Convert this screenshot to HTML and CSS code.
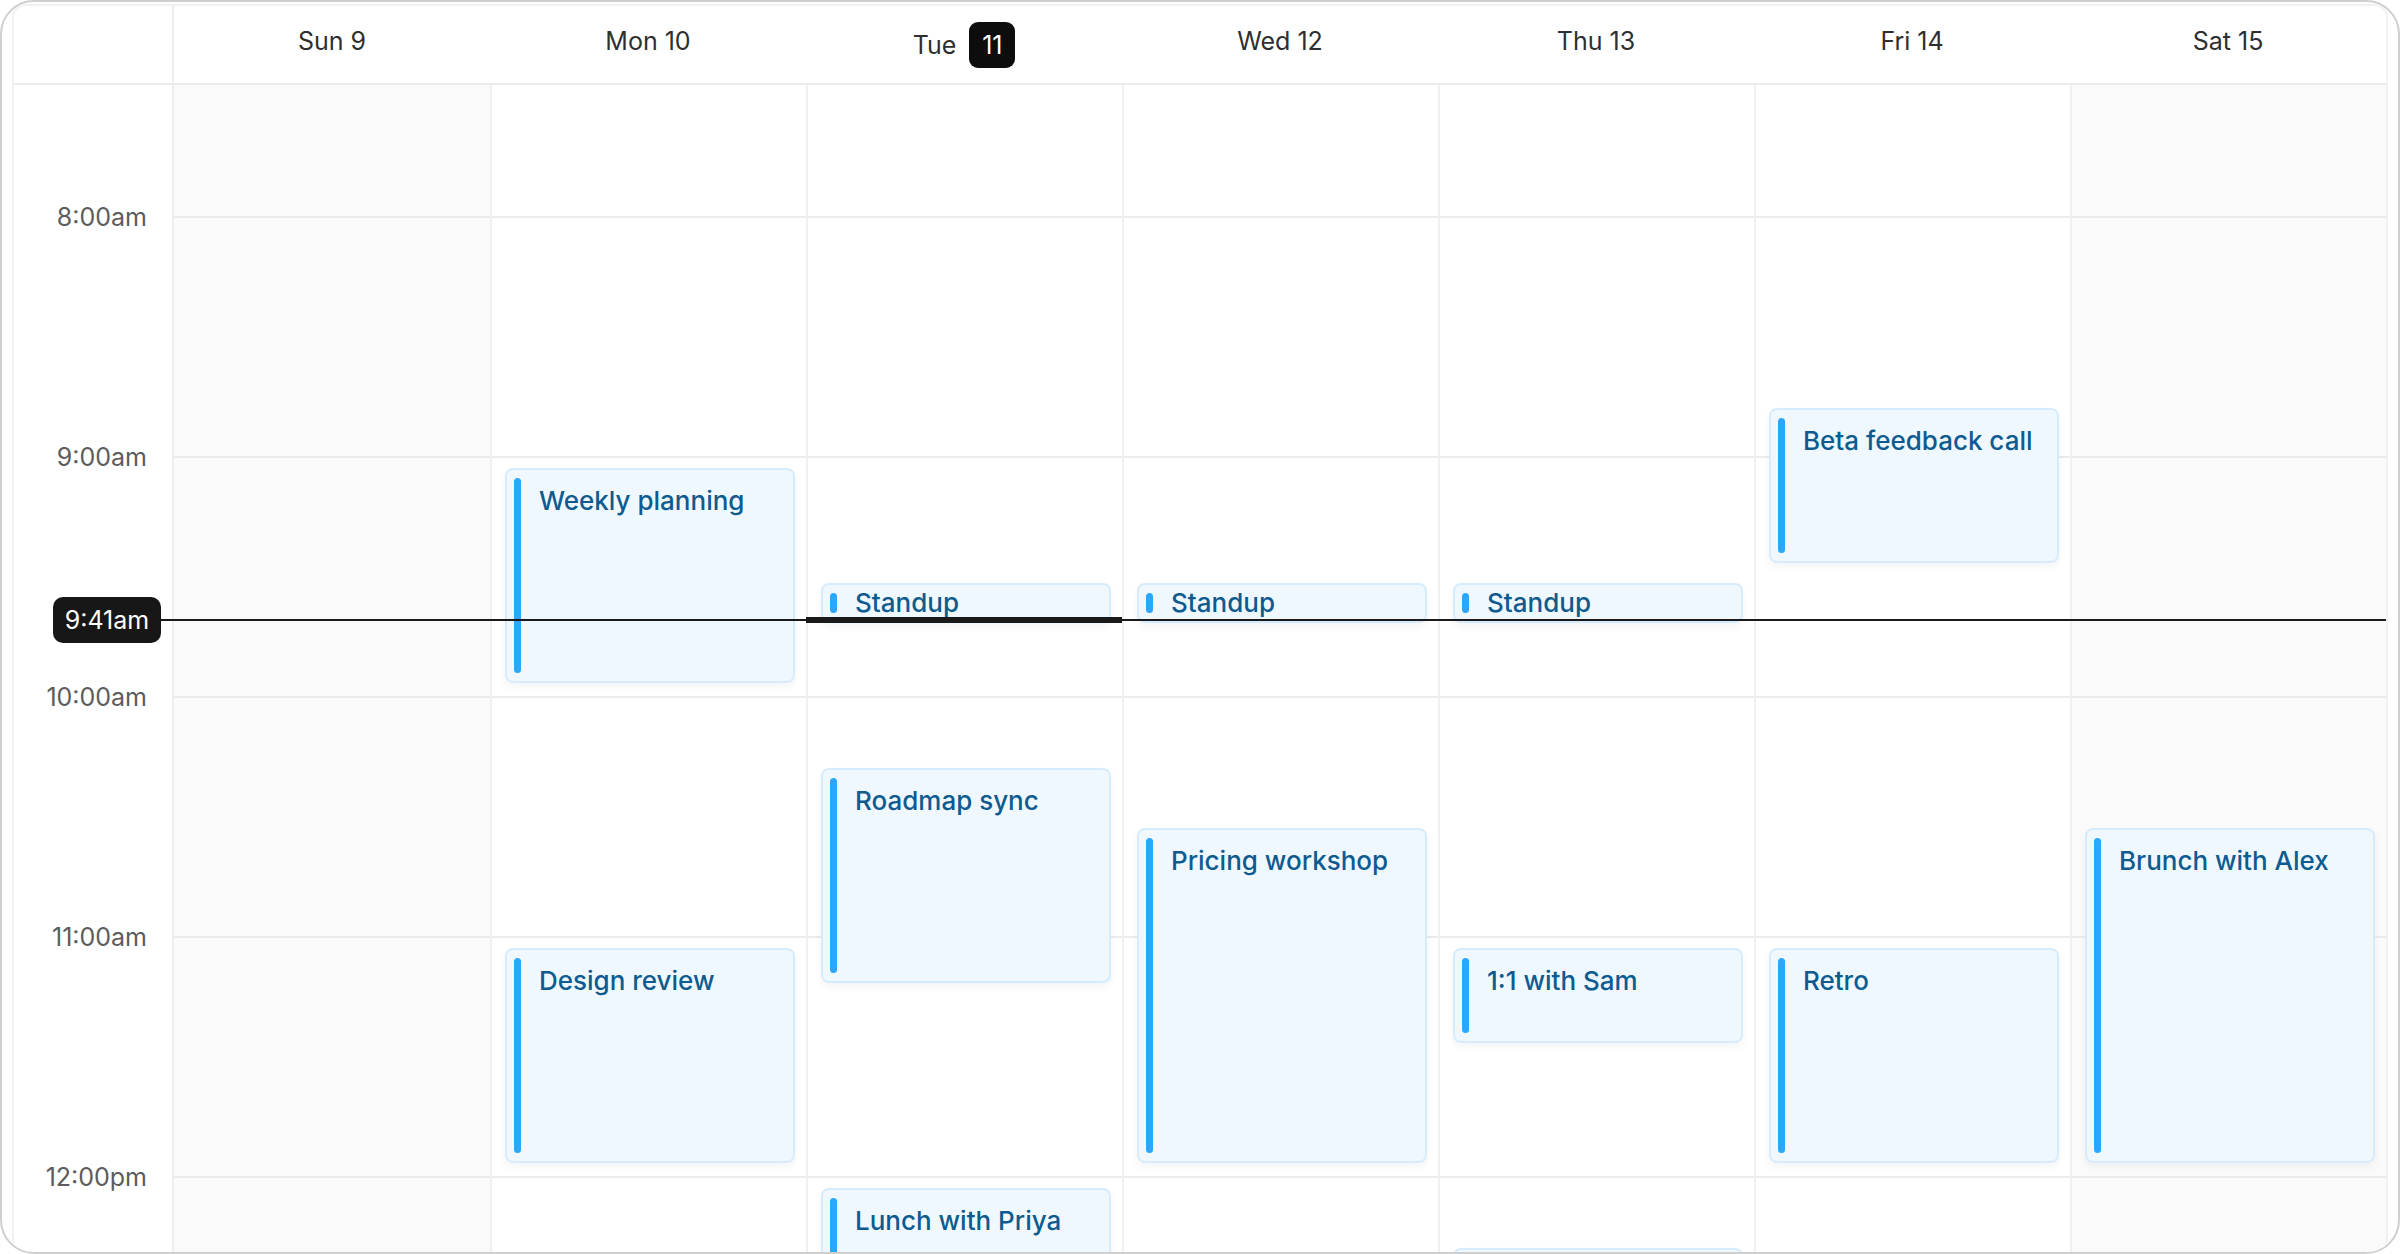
FILE: index.html
```html
<!DOCTYPE html>
<html lang="en">
<head>
<meta charset="utf-8">
<title>Week view</title>
<link rel="stylesheet" href="styles.css">
</head>
<body>
<div class="frame">
  <div class="cal">
    <div class="head">
      <div class="head-gutter"></div>
      <div class="head-cell"><span class="day">Sun 9</span></div>
      <div class="head-cell"><span class="day">Mon 10</span></div>
      <div class="head-cell"><span class="day today">Tue <span class="badge">11</span></span></div>
      <div class="head-cell"><span class="day">Wed 12</span></div>
      <div class="head-cell"><span class="day">Thu 13</span></div>
      <div class="head-cell"><span class="day">Fri 14</span></div>
      <div class="head-cell"><span class="day">Sat 15</span></div>
    </div>
    <div class="body">
      <div class="gutter">
        <div class="g-first"></div>
        <div class="g-hour"><span class="time">8:00am</span></div>
        <div class="g-hour"><span class="time">9:00am</span></div>
        <div class="g-hour"><span class="time">10:00am</span></div>
        <div class="g-hour"><span class="time">11:00am</span></div>
        <div class="g-hour"><span class="time">12:00pm</span></div>
      </div>

      <div class="col weekend first-col">
        <div class="slot-first"></div><div class="slot"></div><div class="slot"></div><div class="slot"></div><div class="slot"></div><div class="slot"></div>
      </div>

      <div class="col">
        <div class="slot-first"></div><div class="slot"></div><div class="slot"></div><div class="slot"></div><div class="slot"></div><div class="slot"></div>
        <div class="event" style="top:383px;height:215px"><span class="bar"></span><span class="title">Weekly planning</span></div>
        <div class="event" style="top:863px;height:215px"><span class="bar"></span><span class="title">Design review</span></div>
      </div>

      <div class="col">
        <div class="slot-first"></div><div class="slot"></div><div class="slot"></div><div class="slot"></div><div class="slot"></div><div class="slot"></div>
        <div class="event short" style="top:498px;height:40px"><span class="bar"></span><span class="title">Standup</span></div>
        <div class="event" style="top:683px;height:215px"><span class="bar"></span><span class="title">Roadmap sync</span></div>
        <div class="event" style="top:1103px;height:215px"><span class="bar"></span><span class="title">Lunch with Priya</span></div>
        <div class="today-line"></div>
      </div>

      <div class="col">
        <div class="slot-first"></div><div class="slot"></div><div class="slot"></div><div class="slot"></div><div class="slot"></div><div class="slot"></div>
        <div class="event short" style="top:498px;height:40px"><span class="bar"></span><span class="title">Standup</span></div>
        <div class="event" style="top:743px;height:335px"><span class="bar"></span><span class="title">Pricing workshop</span></div>
      </div>

      <div class="col">
        <div class="slot-first"></div><div class="slot"></div><div class="slot"></div><div class="slot"></div><div class="slot"></div><div class="slot"></div>
        <div class="event short" style="top:498px;height:40px"><span class="bar"></span><span class="title">Standup</span></div>
        <div class="event" style="top:863px;height:95px"><span class="bar"></span><span class="title">1:1 with Sam</span></div>
        <div class="event" style="top:1163px;height:155px"><span class="bar"></span></div>
      </div>

      <div class="col">
        <div class="slot-first"></div><div class="slot"></div><div class="slot"></div><div class="slot"></div><div class="slot"></div><div class="slot"></div>
        <div class="event" style="top:323px;height:155px"><span class="bar"></span><span class="title">Beta feedback call</span></div>
        <div class="event" style="top:863px;height:215px"><span class="bar"></span><span class="title">Retro</span></div>
      </div>

      <div class="col weekend">
        <div class="slot-first"></div><div class="slot"></div><div class="slot"></div><div class="slot"></div><div class="slot"></div><div class="slot"></div>
        <div class="event" style="top:743px;height:335px"><span class="bar"></span><span class="title">Brunch with Alex</span></div>
      </div>

      <div class="now-line"></div>
      <div class="now-pill">9:41am</div>
    </div>
  </div>
</div>
</body>
</html>
```

FILE: styles.css
```css
* { box-sizing: border-box; }

html, body {
  margin: 0;
  padding: 0;
  width: 2400px;
  height: 1254px;
  overflow: hidden;
  background: #ffffff;
  font-family: Inter, "Noto Sans", "Liberation Sans", sans-serif;
}

.frame {
  width: 2400px;
  height: 1254px;
  border: 2px solid #cfcfcf;
  border-radius: 34px;
  padding: 2px 10px 0 10px;
  overflow: hidden;
  background: #ffffff;
}

.cal {
  height: 100%;
  border: 2px solid #f1f1f1;
  border-bottom: none;
  border-radius: 14px 14px 0 0;
  overflow: hidden;
  display: flex;
  flex-direction: column;
}

/* header */
.head {
  display: grid;
  grid-template-columns: 160px repeat(7, 1fr);
  height: 79px;
  border-bottom: 2px solid #ebebeb;
  flex: none;
}

.head-gutter {
  border-right: 2px solid #eeeeee;
}

.head-cell {
  display: flex;
  justify-content: center;
  align-items: flex-start;
  padding-top: 16px;
}

.day {
  display: inline-flex;
  align-items: center;
  gap: 13px;
  font-size: 25px;
  line-height: 38px;
  color: #2f2f2f;
}

.day.today {
  height: 46px;
}

.badge {
  display: inline-flex;
  align-items: center;
  justify-content: center;
  width: 46px;
  height: 46px;
  border-radius: 9px;
  background: #0d0d0d;
  color: #ffffff;
  font-size: 25px;
}

/* body */
.body {
  position: relative;
  display: grid;
  grid-template-columns: 160px repeat(7, 1fr);
  flex: 1;
  min-height: 0;
  overflow: hidden;
}

.gutter {
  display: flex;
  flex-direction: column;
  border-right: 2px solid #eeeeee;
  padding-right: 25px;
  align-items: stretch;
}

.g-first {
  height: 131px;
  flex: none;
}

.g-hour {
  height: 240px;
  flex: none;
  display: flex;
  justify-content: flex-end;
  align-items: flex-start;
}

.time {
  display: block;
  margin-top: -14px;
  font-size: 25px;
  line-height: 30px;
  color: #5c5c5c;
}

.col {
  position: relative;
  display: flex;
  flex-direction: column;
  border-left: 2px solid #f0f0f0;
  background: #ffffff;
}

.col.first-col {
  border-left: none;
}

.col.weekend {
  background: #fafafa;
}

.slot-first {
  height: 131px;
  flex: none;
}

.slot {
  height: 240px;
  flex: none;
  border-top: 2px solid #ebebeb;
}

/* events */
.event {
  position: absolute;
  left: 13px;
  right: 11px;
  z-index: 1;
  display: flex;
  gap: 18px;
  padding: 8px 8px 8px 7px;
  background: #f0f8ff;
  border: 2px solid #d6ecfd;
  border-radius: 8px;
  box-shadow: 0 4px 8px rgba(20, 40, 60, 0.05);
  overflow: hidden;
}

.bar {
  flex: none;
  width: 7px;
  align-self: stretch;
  border-radius: 4px;
  background: #2aa8ff;
}

.title {
  margin-top: 8px;
  font-size: 26px;
  line-height: 30px;
  font-weight: 500;
  color: #0e5b8f;
  white-space: nowrap;
}

.event.short .title {
  margin-top: 0;
  line-height: 20px;
}

/* now indicator */
.now-line {
  position: absolute;
  left: 147px;
  right: 0;
  top: 534px;
  height: 2px;
  background: #1a1a1a;
  z-index: 2;
}

.today-line {
  position: absolute;
  left: -2px;
  right: 0;
  top: 532px;
  height: 6px;
  background: #1a1a1a;
  z-index: 3;
}

.now-pill {
  position: absolute;
  left: 39px;
  top: 512px;
  width: 108px;
  height: 46px;
  border-radius: 10px;
  background: #171717;
  color: #ffffff;
  font-size: 25px;
  line-height: 46px;
  text-align: center;
  z-index: 3;
}
```
